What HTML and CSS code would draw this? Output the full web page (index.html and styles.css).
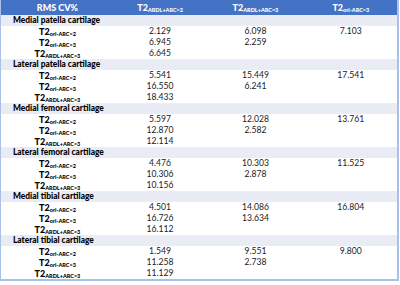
FILE: index.html
```html
<!DOCTYPE html>
<html>
<head>
<meta charset="utf-8">
<link rel="stylesheet" href="styles.css">
</head>
<body>
<table class="cv">
  <colgroup>
    <col class="c1"><col class="c2"><col class="c3"><col class="c4">
  </colgroup>
  <thead>
    <tr class="head">
      <th>RMS CV%</th>
      <th>T2<sub>ARDL+ARC=2</sub></th>
      <th>T2<sub>ARDL+ARC=3</sub></th>
      <th>T2<sub>ori-ARC=3</sub></th>
    </tr>
  </thead>
  <tbody>
    <tr class="sec"><td colspan="4">Medial patella cartilage</td></tr>
    <tr><th>T2<sub>ori-ARC=2</sub></th><td>2.129</td><td>6.098</td><td>7.103</td></tr>
    <tr><th>T2<sub>ori-ARC=3</sub></th><td>6.945</td><td>2.259</td><td></td></tr>
    <tr><th>T2<sub>ARDL+ARC=3</sub></th><td>6.645</td><td></td><td></td></tr>

    <tr class="sec"><td colspan="4">Lateral patella cartilage</td></tr>
    <tr><th>T2<sub>ori-ARC=2</sub></th><td>5.541</td><td>15.449</td><td>17.541</td></tr>
    <tr><th>T2<sub>ori-ARC=3</sub></th><td>16.550</td><td>6.241</td><td></td></tr>
    <tr><th>T2<sub>ARDL+ARC=3</sub></th><td>18.433</td><td></td><td></td></tr>

    <tr class="sec"><td colspan="4">Medial femoral cartilage</td></tr>
    <tr><th>T2<sub>ori-ARC=2</sub></th><td>5.597</td><td>12.028</td><td>13.761</td></tr>
    <tr><th>T2<sub>ori-ARC=3</sub></th><td>12.870</td><td>2.582</td><td></td></tr>
    <tr><th>T2<sub>ARDL+ARC=3</sub></th><td>12.114</td><td></td><td></td></tr>

    <tr class="sec"><td colspan="4">Lateral femoral cartilage</td></tr>
    <tr><th>T2<sub>ori-ARC=2</sub></th><td>4.476</td><td>10.303</td><td>11.525</td></tr>
    <tr><th>T2<sub>ori-ARC=3</sub></th><td>10.306</td><td>2.878</td><td></td></tr>
    <tr><th>T2<sub>ARDL+ARC=3</sub></th><td>10.156</td><td></td><td></td></tr>

    <tr class="sec"><td colspan="4">Medial tibial cartilage</td></tr>
    <tr><th>T2<sub>ori-ARC=2</sub></th><td>4.501</td><td>14.086</td><td>16.804</td></tr>
    <tr><th>T2<sub>ori-ARC=3</sub></th><td>16.726</td><td>13.634</td><td></td></tr>
    <tr><th>T2<sub>ARDL+ARC=3</sub></th><td>16.112</td><td></td><td></td></tr>

    <tr class="sec"><td colspan="4">Lateral tibial cartilage</td></tr>
    <tr><th>T2<sub>ori-ARC=2</sub></th><td>1.549</td><td>9.551</td><td>9.800</td></tr>
    <tr><th>T2<sub>ori-ARC=3</sub></th><td>11.258</td><td>2.738</td><td></td></tr>
    <tr><th>T2<sub>ARDL+ARC=3</sub></th><td>11.129</td><td></td><td></td></tr>
  </tbody>
</table>
</body>
</html>
```
FILE: styles.css
```css
html, body {
  margin: 0;
  padding: 0;
  background: #ffffff;
}

.cv {
  width: 399px;
  table-layout: fixed;
  border-collapse: collapse;
  font-family: Lato, "Open Sans", sans-serif;
  font-size: 8.6px;
  color: #1a1a1a;
  border-left: 1px solid #a9c0e8;
  border-right: 2px solid #a9c0e8;
  border-bottom: 2px solid #a9c0e8;
}

.c1 { width: 113px; }
.c2 { width: 92px; }
.c3 { width: 98px; }
.c4 { width: 93px; }

.cv th,
.cv td {
  padding: 0;
  height: 11px;
  line-height: 11px;
  text-align: center;
  white-space: nowrap;
  vertical-align: middle;
}

.cv th {
  font-weight: 900;
  color: #000000;
  font-size: 9px;
}

.cv sub {
  font-size: 5.5px;
  line-height: 0;
  vertical-align: -1px;
  font-weight: 900;
}

.head th {
  height: 15px;
  line-height: 15px;
  background: #4472c4;
  color: #ffffff;
}

.sec td {
  background: #e9ebf5;
  text-align: left;
  font-weight: 900;
  color: #000000;
  padding-left: 12px;
  font-size: 8.4px;
}
```
